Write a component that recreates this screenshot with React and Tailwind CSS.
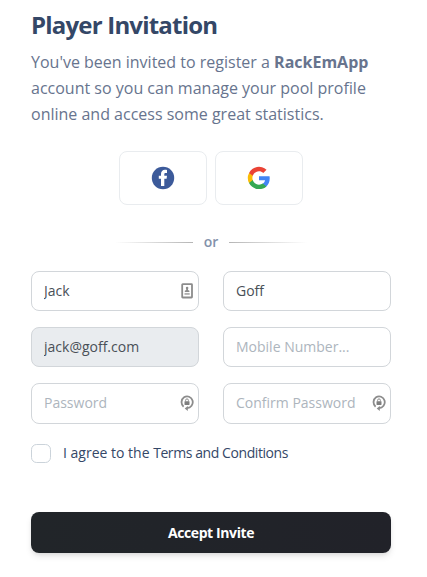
import { useState } from 'react';

function FacebookIcon() {
  return (
    <svg width="24" height="24" viewBox="0 0 24 24">
      <circle cx="12" cy="12" r="11.2" fill="#3c5a9a" />
      <path
        d="M10 20v-7.200H7.800V9.700H10V8c0-2.700 1.500-4.300 4-4.300.8 0 1.500.1 2 .2v3h-1.300c-1 0-1.400.5-1.400 1.300v1.500H16l-.4 3.100h-2.300V20z"
        fill="#fff"
      />
    </svg>
  );
}

function GoogleIcon() {
  return (
    <svg width="24" height="24" viewBox="-0.3 0 24.600 24">
      <path fill="#4285f4" d="M23 12.2c0-.7-.1-1.4-.2-2.1H12v4.2h6.2c-.3 1.4-1.1 2.6-2.3 3.4v2.900h3.700c2.1-2 3.4-4.900 3.400-8.400z" />
      <path fill="#34a853" d="M12 23.4c3.1 0 5.7-1 7.6-2.800l-3.700-2.900c-1 .7-2.300 1.1-3.900 1.1-3 0-5.500-2-6.400-4.700H1.8v3c1.900 3.700 5.700 6.300 10.200 6.300z" />
      <path fill="#fbbc05" d="M5.6 14.1c-.5-1.400-.5-2.900 0-4.300v-3H1.8a11.400 11.400 0 0 0 0 10.300z" />
      <path fill="#ea4335" d="M12 5.1c1.700 0 3.200.6 4.400 1.700l3.300-3.300A11.400 11.400 0 0 0 1.8 6.800l3.800 3C6.500 7.100 9 5.100 12 5.100z" />
    </svg>
  );
}

function ContactIcon() {
  return (
    <svg width="13" height="16" viewBox="0 0 13 16" fill="none">
      <rect x="1.200" y="1.200" width="9.800" height="13.300" rx="0.500" stroke="#8c8c8c" strokeWidth="1.800" />
      <circle cx="6.100" cy="5" r="1.300" fill="#8c8c8c" />
      <path d="M5.200 5h1.800v2l1.400.8v1.100H3.800V7.800L5.200 7z" fill="#8c8c8c" />
      <path d="M3.500 10.900h5.200" stroke="#b0b0b0" strokeWidth="1.900" />
    </svg>
  );
}

function LockIcon() {
  return (
    <svg width="14" height="17" viewBox="0 0 14 17" fill="none">
      <path d="M3.600 11.700A5.600 5.800 0 1 1 7 13" stroke="#8c8c8c" strokeWidth="1.800" />
      <path d="M7.800 10.900v5.100L4.700 13.400z" fill="#8c8c8c" />
      <rect x="4.500" y="6.200" width="5" height="3.800" rx="0.400" fill="#7f7f7f" />
      <path d="M5.600 6.500V5.300a1.400 1.400 0 0 1 2.800 0v1.200" stroke="#8c8c8c" strokeWidth="1" />
    </svg>
  );
}

function Field({ icon, disabled, padding = 'pt-[7px] pb-2', ...props }) {
  return (
    <div className="relative min-w-0">
      <input
        {...props}
        disabled={disabled}
        className={`block h-[40.4px] w-full rounded-lg border border-[#d2d6da] bg-white px-3 ${padding} text-sm leading-[22.4px] text-[#495057] outline-none placeholder:text-[#adb5bd] disabled:bg-[#e9ecef]`}
      />
      {icon && <span className="absolute top-3 right-[5px]">{icon}</span>}
    </div>
  );
}

export default function App() {
  const [firstName, setFirstName] = useState('Jack');
  const [lastName, setLastName] = useState('Goff');
  const [mobile, setMobile] = useState('');
  const [password, setPassword] = useState('');
  const [confirm, setConfirm] = useState('');
  const [agreed, setAgreed] = useState(false);

  return (
    <div className="h-[577px] w-[427px] overflow-hidden bg-white pt-[7px] pr-9 pl-[31px] font-['Open_Sans',sans-serif]">
      {/* Header */}
      <h1 className="text-2xl leading-9 font-bold tracking-[-0.8px] text-[#344767]">Player Invitation</h1>
      <p className="mt-[6px] text-base leading-[26px] text-[#67748e]">
        You've been invited to register a <b className="font-bold">RackEmApp</b>
        <br />
        account so you can manage your pool profile
        <br />
        online and access some great statistics.
      </p>

      {/* Social sign up */}
      <div className="mt-6 flex justify-center gap-2">
        <button type="button" aria-label="Facebook" className="flex h-[54px] w-[88px] items-center justify-center rounded-lg border border-[#e9ecef]">
          <FacebookIcon />
        </button>
        <button type="button" aria-label="Google" className="flex h-[54px] w-[88px] items-center justify-center rounded-lg border border-[#e9ecef]">
          <GoogleIcon />
        </button>
      </div>

      {/* Divider */}
      <div className="mt-[26px] flex items-center justify-center gap-[11px]">
        <span className="mt-0.5 h-px w-[78px] bg-linear-to-r from-transparent to-[#b5b5b5]" />
        <span className="text-sm leading-[21px] font-semibold text-[#8392ab]">or</span>
        <span className="mt-0.5 h-px w-[78px] bg-linear-to-l from-transparent to-[#b5b5b5]" />
      </div>

      {/* Form */}
      <form onSubmit={(e) => e.preventDefault()}>
        <div className="mt-[18.6px] grid grid-cols-2 gap-x-6 gap-y-4">
          <Field value={firstName} onChange={(e) => setFirstName(e.target.value)} icon={<ContactIcon />} />
          <Field value={lastName} onChange={(e) => setLastName(e.target.value)} />
          <Field value="jack@goff.com" disabled readOnly />
          <Field placeholder="Mobile Number..." value={mobile} onChange={(e) => setMobile(e.target.value)} />
          <Field type="password" placeholder="Password" padding="pt-1.5 pb-[9px]" value={password} onChange={(e) => setPassword(e.target.value)} icon={<LockIcon />} />
          <Field type="password" placeholder="Confirm Password" padding="pt-1.5 pb-[9px]" value={confirm} onChange={(e) => setConfirm(e.target.value)} icon={<LockIcon />} />
        </div>

        <label className="mt-5 flex items-center gap-3 text-sm leading-[22px] text-[#344767]">
          <input
            type="checkbox"
            checked={agreed}
            onChange={(e) => setAgreed(e.target.checked)}
            className="h-[19px] w-5 appearance-none rounded-[5.6px] border border-[#cbd3da] checked:bg-[#344767]"
          />
          <span className="-mt-0.5">
            I agree to the <span className="tracking-[-0.42px]">Terms and Conditions</span>
          </span>
        </label>

        <button
          type="submit"
          className="mt-12 h-[41px] w-full rounded-lg bg-linear-to-r from-[#212529] to-[#212229] pt-px text-sm font-bold tracking-[-0.4px] text-white shadow-[0_4px_7px_-1px_rgba(0,0,0,0.11),0_2px_4px_-1px_rgba(0,0,0,0.07)]"
        >
          Accept Invite
        </button>
      </form>
    </div>
  );
}
